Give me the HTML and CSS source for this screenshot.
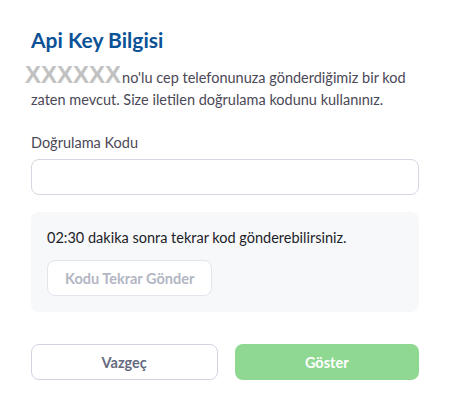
FILE: index.html
```html
<!DOCTYPE html>
<html lang="tr">

<head>
    <meta charset="UTF-8">
    <meta name="viewport" content="width=device-width, initial-scale=1.0">
    <title>Api Key Bilgisi</title>
    <link rel="stylesheet" href="styles.css">
</head>

<body>
    <div class="modal">
        <h2 class="modal-title">Api Key Bilgisi</h2>
        <p class="modal-text"><span class="masked">XXXXXX</span>no'lu cep telefonunuza gönderdiğimiz bir kod
            zaten mevcut. Size iletilen doğrulama kodunu kullanınız.</p>

        <label for="code" class="field-label">Doğrulama Kodu</label>
        <input type="text" id="code" class="field-input">

        <div class="resend-box">
            <p class="resend-text">02:30 dakika sonra tekrar kod gönderebilirsiniz.</p>
            <button type="button" class="btn-resend" disabled>Kodu Tekrar Gönder</button>
        </div>

        <div class="actions">
            <button type="button" class="btn btn-cancel">Vazgeç</button>
            <button type="button" class="btn btn-show">Göster</button>
        </div>
    </div>
</body>

</html>
```

FILE: styles.css
```css
body {
    font-family: Lato, "Open Sans", sans-serif;
    margin: 0;
    padding: 0;
    background-color: #fff;
}

.modal {
    padding: 28px 33px 0 31px;
}

.modal-title {
    margin: 0;
    font-size: 21px;
    line-height: 24px;
    font-weight: 700;
    color: #0c5296;
}

.modal-text {
    margin: 15px 0 0;
    font-size: 14.5px;
    line-height: 22px;
    color: #4b4857;
}

.masked {
    margin-left: -6px;
    margin-right: 1px;
    font-family: "Liberation Sans", Arial, sans-serif;
    font-size: 24px;
    line-height: 0;
    font-weight: 700;
    color: #c2c2c2;
}

.field-label {
    display: block;
    margin-top: 22px;
    margin-bottom: 6px;
    font-size: 14.5px;
    line-height: 20px;
    color: #4b4857;
}

.field-input {
    display: block;
    width: 100%;
    height: 36px;
    box-sizing: border-box;
    border: 1px solid #d8d6e2;
    border-radius: 8px;
    padding: 0 12px;
    font: inherit;
}

.resend-box {
    margin-top: 17px;
    padding: 16px;
    background-color: #f7f8fa;
    border-radius: 8px;
}

.resend-text {
    margin: 0 0 12px;
    font-size: 14.5px;
    line-height: 20px;
    color: #1d1d28;
}

.btn-resend {
    height: 36px;
    padding: 0 17px;
    background-color: #fff;
    border: 1px solid #e4e5ec;
    border-radius: 8px;
    font-family: inherit;
    font-size: 14.5px;
    font-weight: 700;
    color: #b3b6c3;
}

.actions {
    display: flex;
    gap: 17px;
    margin-top: 32px;
}

.btn {
    flex: 1;
    height: 36px;
    border-radius: 8px;
    font-family: inherit;
    font-size: 14.5px;
    font-weight: 700;
    cursor: pointer;
}

.btn-cancel {
    background-color: #fff;
    border: 1px solid #d4d3e3;
    color: #656a80;
}

.btn-show {
    background-color: #8fd891;
    border: none;
    color: #fff;
}
```
